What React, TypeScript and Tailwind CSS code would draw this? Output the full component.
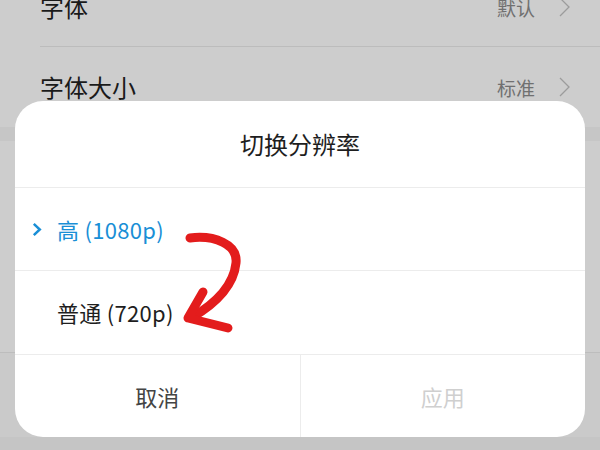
import React from "react"

const font = { fontFamily: '"Noto Sans CJK SC", "Noto Sans", sans-serif' }

function Chevron({ className }: { className?: string }) {
  return (
    <svg width="11" height="20" viewBox="0 0 11 20" className={className} fill="none">
      <polyline points="1,1 10,10 1,19" stroke="currentColor" strokeWidth="1.3" />
    </svg>
  )
}

function SettingRow({ label, value, divider }: { label: string; value: string; divider?: boolean }) {
  return (
    <div className="relative h-[80px] flex items-center pl-[40px] pr-[30px] bg-[#cdcdcd]">
      <span className="text-[24px] leading-none text-[#1a1a1a] flex-1">{label}</span>
      <span className="text-[19px] leading-none text-[#707070]">{value}</span>
      <Chevron className="ml-[24px] text-[#9c9c9c]" />
      {divider && <div className="absolute bottom-0 left-[40px] right-0 h-px bg-[#bcbcbc]" />}
    </div>
  )
}

export default function App() {
  return (
    <div className="relative w-[600px] h-[450px] overflow-hidden bg-[#c5c5c5]" style={font}>
      {/* settings list behind the dialog */}
      <div className="-mt-[33px]">
        <SettingRow label="字体" value="默认" divider />
        <SettingRow label="字体大小" value="标准" />
        <div className="h-[14px] bg-[#c6c6c6]" />
        <div className="h-[212px] bg-[#cdcdcd] border-b border-[#bdbdbd]" />
        <div className="h-[84px] bg-[#cacaca]" />
      </div>

      {/* dialog */}
      <div className="absolute left-[15px] right-[15px] top-[101px] h-[336px] bg-white rounded-[28px] flex flex-col overflow-hidden">
        <div className="h-[87px] flex items-center justify-center border-b border-[#ececec]">
          <span className="text-[24px] text-[#1e1e1e]">切换分辨率</span>
        </div>
        <div className="h-[83px] flex items-center border-b border-[#ececec] pl-[17px]">
          <svg width="10" height="15" viewBox="0 0 10 15" fill="none" className="mr-[15px]">
            <polyline points="1.8,1.8 7.8,7.5 1.8,13.2" stroke="#1a8fd6" strokeWidth="2.5" />
          </svg>
          <span className="text-[22px] tracking-[0.3px] text-[#1a8fd6]">高 (1080p)</span>
        </div>
        <div className="h-[84px] flex items-center border-b border-[#ececec] pl-[42px]">
          <span className="text-[22px] tracking-[0.3px] text-[#1e1e1e]">普通 (720p)</span>
        </div>
        <div className="flex-1 flex">
          <button className="flex-1 flex items-center justify-center border-r border-[#ececec] text-[22px] text-[#444]">
            取消
          </button>
          <button className="flex-1 flex items-center justify-center text-[22px] text-[#cfcfcf]">
            应用
          </button>
        </div>
      </div>

      {/* hand-drawn red arrow */}
      <svg className="absolute left-0 top-0 pointer-events-none" width="600" height="450" fill="none">
        <path
          d="M190 238 C214 235 238 244 236 263 C234 282 222 300 191 318"
          stroke="#e31c1c"
          strokeWidth="9"
          strokeLinecap="round"
        />
        <path d="M203 292 L188 318 L228 328" stroke="#e31c1c" strokeWidth="9" strokeLinecap="round" strokeLinejoin="round" />
      </svg>
    </div>
  )
}
